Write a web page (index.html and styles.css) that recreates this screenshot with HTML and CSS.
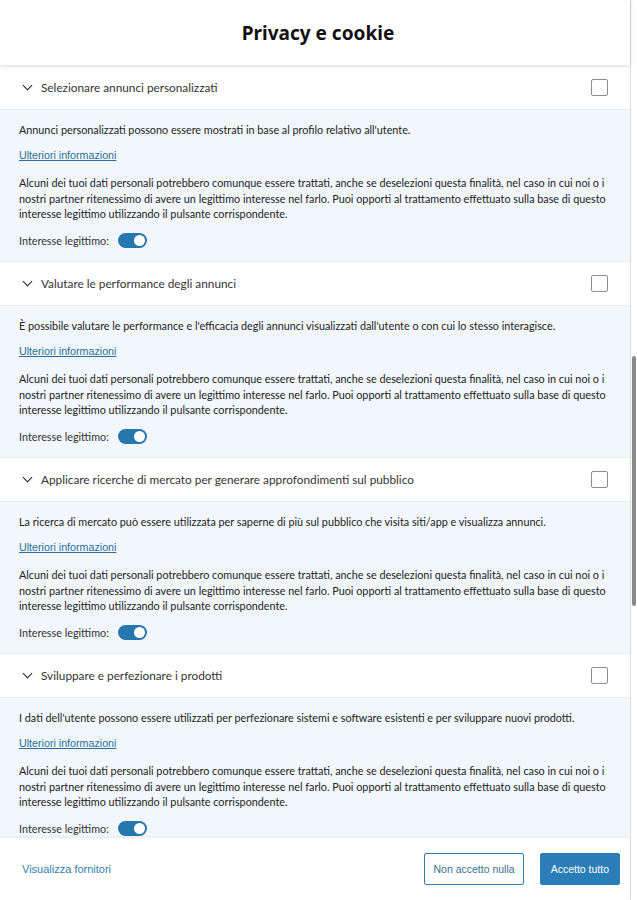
FILE: index.html
```html
<!DOCTYPE html>
<html lang="it">
<head>
    <meta charset="UTF-8">
    <title>Privacy e cookie</title>
    <link rel="stylesheet" href="styles.css">
</head>
<body>
<div class="page">
    <div class="dialog">
        <header class="dialog-head">
            <h1>Privacy e cookie</h1>
        </header>

        <div class="dialog-body">
            <section class="purpose">
                <div class="purpose-head">
                    <span class="chevron"></span>
                    <span class="purpose-title">Selezionare annunci personalizzati</span>
                    <span class="check"></span>
                </div>
                <div class="purpose-body">
                    <p class="desc">Annunci personalizzati possono essere mostrati in base al profilo relativo all'utente.</p>
                    <a class="more" href="#">Ulteriori informazioni</a>
                    <p class="legit">Alcuni dei tuoi dati personali potrebbero comunque essere trattati, anche se deselezioni questa finalità, nel caso in cui noi o i nostri partner ritenessimo di avere un legittimo interesse nel farlo. Puoi opporti al trattamento effettuato sulla base di questo interesse legittimo utilizzando il pulsante corrispondente.</p>
                    <div class="toggle-row">Interesse legittimo: <span class="toggle"></span></div>
                </div>
            </section>

            <section class="purpose">
                <div class="purpose-head">
                    <span class="chevron"></span>
                    <span class="purpose-title">Valutare le performance degli annunci</span>
                    <span class="check"></span>
                </div>
                <div class="purpose-body">
                    <p class="desc">È possibile valutare le performance e l'efficacia degli annunci visualizzati dall'utente o con cui lo stesso interagisce.</p>
                    <a class="more" href="#">Ulteriori informazioni</a>
                    <p class="legit">Alcuni dei tuoi dati personali potrebbero comunque essere trattati, anche se deselezioni questa finalità, nel caso in cui noi o i nostri partner ritenessimo di avere un legittimo interesse nel farlo. Puoi opporti al trattamento effettuato sulla base di questo interesse legittimo utilizzando il pulsante corrispondente.</p>
                    <div class="toggle-row">Interesse legittimo: <span class="toggle"></span></div>
                </div>
            </section>

            <section class="purpose">
                <div class="purpose-head">
                    <span class="chevron"></span>
                    <span class="purpose-title">Applicare ricerche di mercato per generare approfondimenti sul pubblico</span>
                    <span class="check"></span>
                </div>
                <div class="purpose-body">
                    <p class="desc">La ricerca di mercato può essere utilizzata per saperne di più sul pubblico che visita siti/app e visualizza annunci.</p>
                    <a class="more" href="#">Ulteriori informazioni</a>
                    <p class="legit">Alcuni dei tuoi dati personali potrebbero comunque essere trattati, anche se deselezioni questa finalità, nel caso in cui noi o i nostri partner ritenessimo di avere un legittimo interesse nel farlo. Puoi opporti al trattamento effettuato sulla base di questo interesse legittimo utilizzando il pulsante corrispondente.</p>
                    <div class="toggle-row">Interesse legittimo: <span class="toggle"></span></div>
                </div>
            </section>

            <section class="purpose">
                <div class="purpose-head">
                    <span class="chevron"></span>
                    <span class="purpose-title">Sviluppare e perfezionare i prodotti</span>
                    <span class="check"></span>
                </div>
                <div class="purpose-body">
                    <p class="desc">I dati dell'utente possono essere utilizzati per perfezionare sistemi e software esistenti e per sviluppare nuovi prodotti.</p>
                    <a class="more" href="#">Ulteriori informazioni</a>
                    <p class="legit">Alcuni dei tuoi dati personali potrebbero comunque essere trattati, anche se deselezioni questa finalità, nel caso in cui noi o i nostri partner ritenessimo di avere un legittimo interesse nel farlo. Puoi opporti al trattamento effettuato sulla base di questo interesse legittimo utilizzando il pulsante corrispondente.</p>
                    <div class="toggle-row">Interesse legittimo: <span class="toggle"></span></div>
                </div>
            </section>
        </div>

        <footer class="dialog-foot">
            <a class="vendors" href="#">Visualizza fornitori</a>
            <div class="actions">
                <button class="btn btn-outline">Non accetto nulla</button>
                <button class="btn btn-primary">Accetto tutto</button>
            </div>
        </footer>
    </div>
    <div class="scrollbar">
        <div class="thumb"></div>
    </div>
</div>
</body>
</html>
```

FILE: styles.css
```css
body {
    margin: 0;
    background: #fff;
    font-family: Lato, "Noto Sans", sans-serif;
    color: #222;
}

.page {
    display: flex;
    height: 900px;
    overflow: hidden;
}

.dialog {
    width: 631px;
    height: 900px;
    display: flex;
    flex-direction: column;
    border-right: 1px solid #dcdcdc;
    box-sizing: border-box;
}

.dialog-head {
    height: 65px;
    flex: none;
    display: flex;
    align-items: center;
    justify-content: center;
    box-shadow: 0 1px 4px rgba(0, 0, 0, 0.16);
    position: relative;
    z-index: 2;
    background: #fff;
}

.dialog-head h1 {
    margin: 0;
    font-family: "Noto Sans", sans-serif;
    font-size: 19px;
    font-weight: 700;
    color: #111;
    padding-left: 6px;
}

.dialog-body {
    flex: 1;
    overflow: hidden;
    padding-top: 1px;
}

.purpose-head {
    height: 44px;
    display: flex;
    align-items: center;
    padding: 0 22px;
    border-bottom: 1px solid #e9eef2;
    box-sizing: border-box;
    background: #fff;
}

.chevron {
    width: 6px;
    height: 6px;
    border-right: 1.6px solid #222;
    border-bottom: 1.6px solid #222;
    transform: rotate(45deg);
    margin: -4px 10px 0 2px;
}

.purpose-title {
    flex: 1;
    font-size: 11.8px;
    color: #333;
}

.check {
    width: 15px;
    height: 15px;
    border: 1px solid #8d8d8d;
    border-radius: 2px;
    background: #fff;
}

.purpose-body {
    background: #f1f7fc;
    padding: 12px 19px 12.6px;
    font-size: 10.8px;
    color: #222;
    border-bottom: 1px solid #e9eef2;
}

.desc {
    margin: 0;
    line-height: 16px;
}

.more {
    display: block;
    margin-top: 9px;
    line-height: 16px;
    font-family: "Liberation Sans", Arial, sans-serif;
    font-size: 10.7px;
    color: #2b6f9b;
}

.legit {
    margin: 12px 0 0;
    line-height: 15.5px;
}

.toggle-row {
    margin-top: 11px;
    height: 16px;
    display: flex;
    align-items: center;
    color: #333;
}

.toggle {
    width: 29px;
    height: 15px;
    border-radius: 8px;
    background: #2677ad;
    margin-left: 9px;
    display: flex;
    justify-content: flex-end;
    align-items: center;
    padding-right: 2px;
    box-sizing: border-box;
}

.toggle::after {
    content: "";
    width: 11px;
    height: 11px;
    border-radius: 50%;
    background: #fff;
}

.dialog-foot {
    height: 62px;
    flex: none;
    display: flex;
    align-items: center;
    justify-content: space-between;
    padding: 0 10px 0 22px;
    background: #fff;
    box-shadow: 0 -1px 3px rgba(0, 0, 0, 0.06);
    position: relative;
    z-index: 2;
    font-family: "Liberation Sans", Arial, sans-serif;
}

.vendors {
    font-size: 11px;
    color: #2e7fae;
    text-decoration: none;
}

.actions {
    display: flex;
    gap: 16px;
}

.btn {
    height: 32px;
    font-family: "Liberation Sans", Arial, sans-serif;
    font-size: 10.5px;
    border-radius: 2px;
    padding: 0 8px;
    cursor: pointer;
}

.btn-outline {
    background: #fff;
    color: #3a6f8f;
    border: 1px solid #2f7fb1;
}

.btn-primary {
    background: #2a7db6;
    color: #fff;
    border: 1px solid #2a7db6;
    padding: 0 10px;
}

.scrollbar {
    flex: 1;
    position: relative;
}

.thumb {
    position: absolute;
    top: 356px;
    left: 1px;
    width: 4px;
    height: 250px;
    border-radius: 2px;
    background: #8a8a8a;
}
```
